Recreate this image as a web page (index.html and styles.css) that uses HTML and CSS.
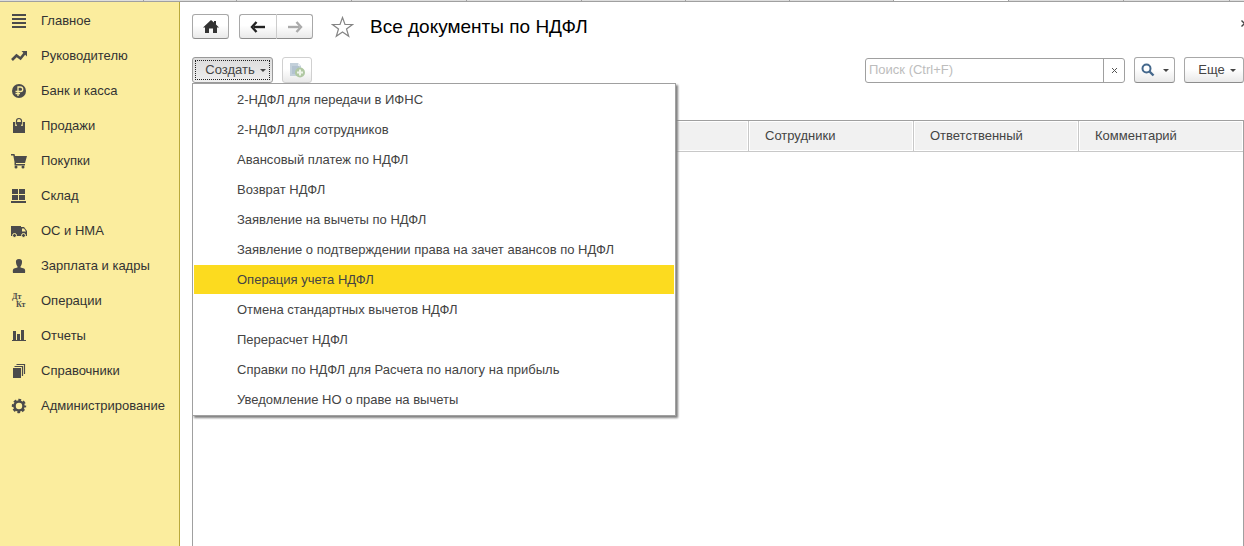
FILE: index.html
```html
<!DOCTYPE html>
<html lang="ru">
<head>
<meta charset="utf-8">
<title>Все документы по НДФЛ</title>
<link rel="stylesheet" href="styles.css">
</head>
<body>
<div class="tabs"><i class="tab t143"></i><i class="tab t93"></i><i class="tab"></i><i class="tab"></i><i class="tab"></i><i class="tab t104"></i><i class="tab t104"></i><i class="tab t104"></i><i class="tab active"></i><i class="tab"></i><i class="tab t106"></i></div>
<div class="app">
<nav class="sidebar">
<a href="#"><svg class="icon" viewBox="0 0 16 16"><path d="M1 1h14v2H1zM1 5h14v2H1zM1 9h14v2H1zM1 13h14v2H1z"/></svg>Главное</a>
<a href="#"><svg class="icon" viewBox="0 0 16 16"><path d="M1 12l4.500-4.500 4 3L13.500 5.500" fill="none" stroke="#4b4b4b" stroke-width="2.600"/><path d="M10.500 3H16v5.500z"/></svg>Руководителю</a>
<a href="#"><svg class="icon" viewBox="0 0 16 16"><circle cx="8" cy="8" r="7"/><path d="M7 13V4h2.500a2.200 2.200 0 0 1 0 4.500H4.500M4.500 10.700H9" fill="none" stroke="#fbed9e" stroke-width="1.300"/></svg>Банк и касса</a>
<a href="#"><svg class="icon" viewBox="0 0 16 16"><path d="M2 4h12v11H2z"/><path d="M5 8V3.500a3 3 0 0 1 6 0V8" fill="none" stroke="#fbed9e" stroke-width="1.600"/><path d="M5.500 6.500V3a2.500 2.500 0 0 1 5 0v3.500" fill="none" stroke="#4b4b4b" stroke-width="1.200"/></svg>Продажи</a>
<a href="#"><svg class="icon" viewBox="0 0 16 16"><path d="M0 1h3.500l.5 2h12l-2 7H5v1h9v1.500H3.500V9L2.300 2.500H0z"/><circle cx="5" cy="14" r="1.500"/><circle cx="12" cy="14" r="1.500"/></svg>Покупки</a>
<a href="#"><svg class="icon" viewBox="0 0 16 16"><path d="M1 1h6v5H1zM8 1h6v5H8zM1 7h6v5H1zM8 7h6v5H8zM0 13h15v2H0z"/></svg>Склад</a>
<a href="#"><svg class="icon" viewBox="0 0 16 16"><path d="M0 3h10v1h3l3 4v5H0z"/><path d="M11 5.500h2l2 3h-4z" fill="#fbed9e"/><g stroke="#fbed9e"><circle cx="3.500" cy="12.500" r="2"/><circle cx="12.500" cy="12.500" r="2"/></g></svg>ОС и НМА</a>
<a href="#"><svg class="icon" viewBox="0 0 16 16"><path d="M8 1c2.500 0 3.300 1.500 3 3.500C10.800 6.500 10 8 9.500 8.500v1L13 10.500c1 .500 1.500 2 1 4.500h-12c-.5-2.500 0-4 1-4.500l3.500-1v-1C6 8 5.200 6.500 5 4.500 4.700 2.500 5.500 1 8 1z"/></svg>Зарплата и кадры</a>
<a href="#"><svg class="icon" viewBox="0 0 16 16"><text class="dk" x="1" y="6">Дт</text><text class="dk" x="5" y="14">Кт</text></svg>Операции</a>
<a href="#"><svg class="icon" viewBox="0 0 16 16"><path d="M2 3h3v9H2zM6 6h3v6H6zM10 2h3v10h-3zM1 12h14v1H1z"/></svg>Отчеты</a>
<a href="#"><svg class="icon" viewBox="0 0 16 16"><path d="M2 5h8v10H2z"/><path d="M3.500 3.500h8V13M5.500 1.500h8V11" fill="none" stroke="#4b4b4b" stroke-width="1.200"/></svg>Справочники</a>
<a href="#"><svg class="icon" viewBox="0 0 16 16"><circle cx="8" cy="8" r="4.500" fill="none" stroke="#4b4b4b" stroke-width="2.600"/><circle cx="8" cy="8" r="6" fill="none" stroke="#4b4b4b" stroke-width="2.400" stroke-dasharray="2.700 2.012" stroke-dashoffset="1.350"/></svg>Администрирование</a>
</nav>
<main class="page">
<header class="head">
<button class="btn home" aria-label="Домой"><svg width="16" height="14" viewBox="0 0 16 14"><path d="M8 0L0 7.500h2V13h4V8.500h4V13h4V7.500h2l-3-3V1h-2v1.500z" fill="#333"/></svg></button>
<div class="pair"><button class="btn" aria-label="Назад"><svg width="16" height="12" viewBox="0 0 16 12"><path d="M4 6h11" stroke="#222" stroke-width="2.400"/><path d="M6.500 1L2 6l4.500 5" fill="none" stroke="#222" stroke-width="2.400"/></svg></button><button class="btn" aria-label="Вперед"><svg width="16" height="12" viewBox="0 0 16 12"><path d="M1 6h11" stroke="#aaa" stroke-width="2.400"/><path d="M9.500 1L14 6l-4.500 5" fill="none" stroke="#aaa" stroke-width="2.400"/></svg></button></div>
<svg class="star" width="23" height="22" viewBox="0 0 23 22"><path d="M11.500 1.500l2.500 7h7.500l-6 4.500 2.200 7.300-6.200-4.400-6.200 4.400L7.500 13l-6-4.500H9z" fill="none" stroke="#858585" stroke-width="1.200"/></svg>
<h1>Все документы по НДФЛ</h1>
<button class="close" aria-label="Закрыть"><svg width="7" height="7" viewBox="0 0 7 7"><path d="M.5.500l6 6M6.500.500l-6 6" stroke="#444" stroke-width="1.400"/></svg></button>
</header>
<div class="toolbar">
<div class="create">
<button class="btn pressed">Создать<i class="caret"></i></button>
<ul class="menu">
<li><button>2-НДФЛ для передачи в ИФНС</button></li>
<li><button>2-НДФЛ для сотрудников</button></li>
<li><button>Авансовый платеж по НДФЛ</button></li>
<li><button>Возврат НДФЛ</button></li>
<li><button>Заявление на вычеты по НДФЛ</button></li>
<li><button>Заявление о подтверждении права на зачет авансов по НДФЛ</button></li>
<li><button class="current">Операция учета НДФЛ</button></li>
<li><button>Отмена стандартных вычетов НДФЛ</button></li>
<li><button>Перерасчет НДФЛ</button></li>
<li><button>Справки по НДФЛ для Расчета по налогу на прибыль</button></li>
<li><button>Уведомление НО о праве на вычеты</button></li>
</ul>
</div>
<button class="btn copy" disabled aria-label="Скопировать"><svg width="16" height="16" viewBox="0 0 16 16"><path d="M1 1h8l3 3v10H1z" fill="#c3d0da"/><path d="M9 1v3h3" fill="#e6ecf0"/><path d="M3 5h7M3 7h7M3 9h4M3 11h4" stroke="#a3b6c6"/><circle cx="11" cy="10.500" r="5" fill="#b0c8a2"/><path d="M11 7.500v6M8 10.500h6" stroke="#eef4ea" stroke-width="2"/></svg></button>
<div class="search"><input type="text" placeholder="Поиск (Ctrl+F)" aria-label="Поиск"><button aria-label="Очистить"><svg width="5" height="5" viewBox="0 0 5 5"><path d="M0 0l5 5M5 0L0 5" stroke="#555"/></svg></button></div>
<button class="btn find" aria-label="Найти"><svg width="14" height="14" viewBox="0 0 14 14"><circle cx="5.500" cy="5.500" r="4" fill="none" stroke="#44688c" stroke-width="2"/><path d="M8.500 8.500l4 4" stroke="#44688c" stroke-width="2.400"/></svg><i class="caret"></i></button>
<button class="btn more">Еще<i class="caret"></i></button>
</div>
<div class="list">
<table>
<thead><tr><th></th><th class="col">Сотрудники</th><th class="col">Ответственный</th><th class="col">Комментарий</th></tr></thead>
</table>
</div>
</main>
</div>
</body>
</html>
```
FILE: styles.css
```css
* { box-sizing: border-box; }
body {
  margin: 0;
  min-height: 100vh;
  display: flex;
  flex-direction: column;
  overflow: hidden;
  background: #fff;
  color: #444;
  font: 13px/16px "Liberation Sans", Arial, sans-serif;
}
button, input { font: inherit; color: inherit; margin: 0; }
svg { display: block; flex: none; }

.tabs { display: flex; height: 2px; background: #dedede; border-bottom: 1px solid #a0a0a0; overflow: hidden; }
.tab { flex: none; width: 115px; border-right: 1px solid #a0a0a0; }
.t143 { width: 144px; }
.t93 { width: 93px; }
.t104 { width: 104px; }
.t106 { width: 106px; }
.tab.active { background: #fff; }

.app { flex: 1; display: flex; }
.sidebar { flex: none; width: 180px; padding-top: 1px; background: #fbed9e; border-right: 1px solid #b9a93c; }
.sidebar a { display: flex; align-items: center; gap: 14px; height: 35px; padding-left: 11px; color: #333; text-decoration: none; white-space: nowrap; }
.icon { width: 16px; height: 16px; fill: #4b4b4b; overflow: visible; }
.dk { font: bold 8px "Liberation Serif", serif; }

.page { flex: 1; min-width: 0; display: flex; flex-direction: column; padding: 12px 0 0 12px; }
.head { position: relative; display: flex; align-items: center; height: 25px; }
.btn {
  display: flex; align-items: center; justify-content: center;
  padding: 0; border: 1px solid #a8a8a8; border-bottom-color: #8c8c8c; border-radius: 3px;
  background: linear-gradient(#fff 45%, #e9e9e9);
}
.home { width: 37px; height: 25px; margin-right: 10px; }
.pair { display: flex; margin-right: 18px; }
.pair .btn { width: 37px; height: 25px; }
.pair .btn:first-child { width: 38px; border-radius: 3px 0 0 3px; border-right-color: #ccc; }
.pair .btn:last-child { width: 36px; border-radius: 0 3px 3px 0; border-left: 0; }
.star { margin-right: 16px; }
h1 { margin: 0; font-size: 19px; line-height: 24px; font-weight: normal; color: #000; }
.close { position: absolute; right: -4px; top: 6px; padding: 0; border: 0; background: none; }

.toolbar { display: flex; align-items: center; height: 26px; margin-top: 18px; }
.toolbar .btn { height: 26px; }
.create { position: relative; margin-right: 9px; }
.caret { border: 3px solid transparent; border-top-color: #444; border-bottom: 0; margin-left: 5px; }
.create .pressed { width: 81px; padding-left: 6px; background: linear-gradient(#dcdcdc, #efefef); border-color: #999; outline: 1px dotted #222; outline-offset: -4px; }
.menu {
  position: absolute; z-index: 1; left: 0; top: 100%;
  width: 484px; margin: 0; padding: 0 1px 1px; list-style: none;
  background: #fff; border: 1px solid #a0a0a0; box-shadow: 2px 2px 2px #808080;
}
.menu li { padding-top: 1px; }
.menu button { display: block; width: 100%; height: 29px; padding: 0 0 0 43px; border: 0; background: none; text-align: left; white-space: nowrap; }
.menu .current { background: #fcdb1f; }
.copy { width: 30px; }
.toolbar .copy { border-color: #d0d0d0; }
.search { display: flex; width: 260px; height: 25px; margin-left: auto; margin-right: 9px; border: 1px solid #a0a0a0; border-radius: 3px; }
.search input { flex: 1; min-width: 0; padding: 0 3px; border: 0; background: none; outline: 0; }
.search input::placeholder { color: #bdbdbd; opacity: 1; }
.search button { display: flex; align-items: center; justify-content: center; width: 21px; padding: 0; border: 0; border-left: 1px solid #a0a0a0; background: none; }
.find { width: 41px; margin-right: 9px; }
.find .caret { margin-left: 8px; }
.more { width: 60px; padding-left: 6px; }

.list { flex: 1; margin-top: 37px; border: 1px solid #a0a0a0; border-bottom: 0; }
table { width: 100%; border-collapse: separate; border-spacing: 0; table-layout: fixed; }
th { height: 31px; padding: 0 0 0 16px; font-weight: normal; text-align: left; background: #f1f1f1; border-bottom: 1px solid #c8c8c8; box-shadow: inset 0 0 0 1px #fff; }
.col { width: 165px; border-left: 1px solid #c8c8c8; }
```
